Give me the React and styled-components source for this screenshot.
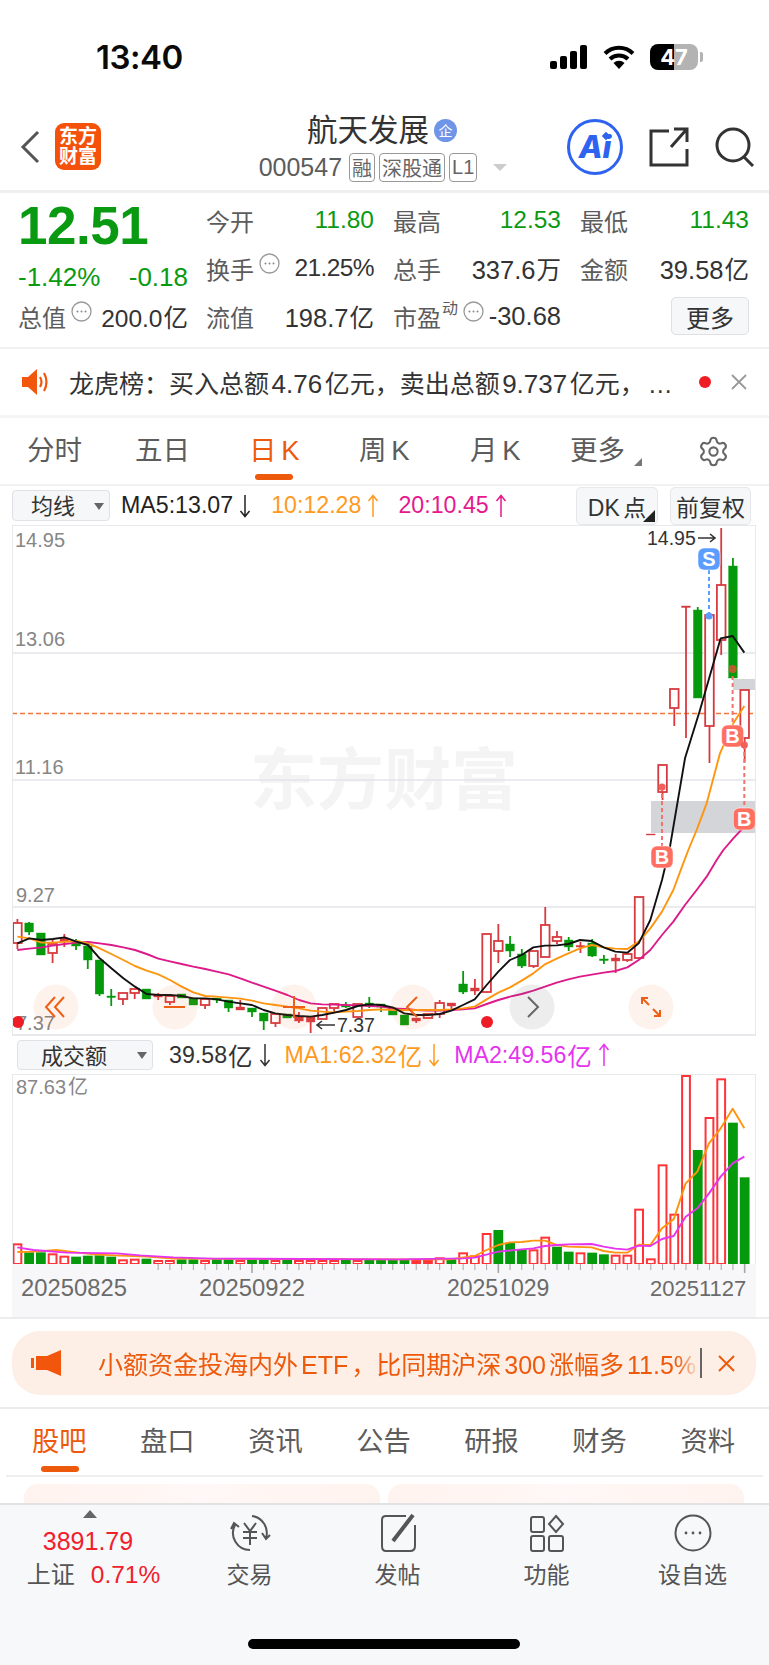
import React from "react";
import styled, { createGlobalStyle } from "styled-components";
import { Settings } from "lucide-react";

const FONT = `"Liberation Sans", "Noto Sans CJK SC", sans-serif`;
const ORANGE = "#ee5a0c";
const GREEN = "#0a9a12";
const GREY = "#5c5c5c";

const Global = createGlobalStyle`
  html, body { margin: 0; padding: 0; background: #fff; }
  body { font-family: ${FONT}; color: #333; }
  * { box-sizing: border-box; }
`;

const Page = styled.div`
  width: 769px; height: 1665px; overflow: hidden; background: #fff;
  display: flex; flex-direction: column; position: relative;
`;

/* ---------- status bar ---------- */
const StatusBar = styled.div`
  height: 108px; flex: none; display: flex; align-items: center;
  justify-content: space-between; padding: 6px 71px 0 96px;
`;
const Clock = styled.div`
  font-family: "Inter", ${FONT}; font-size: 33px; font-weight: 600; color: #0a0a0a; letter-spacing: -0.5px;
`;
const StatusIcons = styled.div`display: flex; align-items: center; gap: 15px;`;
const Battery = styled.div`
  width: 48px; height: 26px; border-radius: 8px; position: relative;
  background: linear-gradient(90deg, #000 0 50%, #b3b3b3 50% 100%);
  display: flex; align-items: center; justify-content: center;
  font-family: "Inter", ${FONT}; font-size: 22px; font-weight: 700; color: #fff;
  &::after { content: ""; position: absolute; right: -5px; top: 8px; width: 3px; height: 10px; border-radius: 0 2px 2px 0; background: #b3b3b3; }
`;

/* ---------- header ---------- */
const Header = styled.div`
  height: 85px; flex: none; display: grid; grid-template-columns: 203px 1fr 203px;
  align-items: center; padding-bottom: 5px; border-bottom: 3px solid #f0f0f0;
`;
const HeaderLeft = styled.div`display: flex; align-items: center; gap: 15px; padding-left: 20px;`;
const Logo = styled.div`
  width: 46px; height: 47px; border-radius: 9px; background: #f4510b; color: #fff;
  font-size: 19px; line-height: 20px; font-weight: 700; text-align: center;
  display: flex; align-items: center; justify-content: center;
`;
const TitleBlock = styled.div`display: flex; flex-direction: column; align-items: center; gap: 4px;`;
const TitleRow = styled.div`display: flex; align-items: center; gap: 5px; height: 38px; margin-right: 5px;`;
const Title = styled.div`font-size: 30.5px; color: #333; line-height: 38px;`;
const QiBadge = styled.span`
  width: 23px; height: 23px; border-radius: 50%; background: #6f95e8; color: #fff;
  font-size: 14px; display: flex; align-items: center; justify-content: center;
`;
const SubRow = styled.div`display: flex; align-items: center; gap: 4px; white-space: nowrap; margin-right: 3px;`;
const Code = styled.span`font-size: 25px; color: ${GREY}; margin-right: 3px;`;
const Tag = styled.span`
  height: 29px; padding: 0 2px; border: 1.5px solid #999; border-radius: 4px; color: #666;
  font-size: 20px; display: flex; align-items: center;
`;
const TagCaret = styled.span`
  width: 0; height: 0; border: 7px solid transparent; border-top: 7px solid #ccc; border-bottom: 0; margin-left: 12px;
`;
const HeaderRight = styled.div`display: flex; align-items: center; justify-content: flex-end; gap: 26px; padding-right: 14px;`;
const AiRound = styled.div`
  width: 56px; height: 56px; border-radius: 50%; border: 3px solid #2e62f0; color: #2e62f0;
  display: flex; align-items: center; justify-content: center; flex: none;
  font-family: "Inter", ${FONT}; font-weight: 800; font-style: italic; font-size: 31px; position: relative;
  &::after { content: ""; position: absolute; top: 11px; right: 11px; width: 6px; height: 6px; background: #2e62f0; transform: rotate(45deg); }
`;

/* ---------- quote ---------- */
const Quote = styled.div`
  height: 156px; flex: none; display: flex; border-bottom: 2px solid #f1f1f1;
`;
const QuoteLeft = styled.div`width: 206px; flex: none; padding: 3px 0 0 18px;`;
const Price = styled.div`
  font-size: 53px; font-weight: 700; line-height: 60px; color: ${GREEN}; letter-spacing: -0.5px; height: 61px;
`;
const ChangeRow = styled.div`
  width: 170px; height: 40px; display: flex; justify-content: space-between; align-items: center;
  font-size: 26px; color: ${GREEN};
`;
const CapRow = styled.div`
  width: 170px; height: 38px; display: flex; align-items: center; font-size: 24px; color: ${GREY};
  justify-content: space-between;
`;
const StatGrid = styled.div`
  display: grid; grid-template-columns: 168px 168px 169px; column-gap: 19px;
  grid-auto-rows: 48px; padding-top: 3px;
`;
const Stat = styled.div`display: flex; align-items: center; justify-content: space-between; white-space: nowrap;`;
const StatLabel = styled.span`display: flex; align-items: center; font-size: 24px; color: ${GREY};`;
const Sup = styled.span`font-size: 16px; margin-bottom: 18px; margin-left: 1px;`;
const StatValue = styled.span`
  font-size: ${(p) => (p.$wide ? 25.5 : 24.5)}px; color: ${(p) => (p.$up ? GREEN : "#333")};
  ${(p) => p.$tight && "letter-spacing: -0.6px;"}
`;
const Unit = styled.span`margin-left: 1px; font-size: 24.5px;`;
const MoreButton = styled.div`
  margin-left: auto; width: 78px; height: 38px; border: 1.5px solid #e0e0e0; border-radius: 5px; background: #f6f7f8;
  display: flex; align-items: center; justify-content: center; font-size: 24px; color: #333;
`;
const DotsWrap = styled.svg`flex: none; margin: 0 0 10px 5px;`;
const Dots = () => (
  <DotsWrap width="21" height="21" viewBox="0 0 21 21">
    <circle cx="10.5" cy="10.5" r="9.5" fill="none" stroke="#999" strokeWidth="1.3" />
    <circle cx="6.5" cy="10.5" r="1" fill="#888" /><circle cx="10.5" cy="10.5" r="1" fill="#888" /><circle cx="14.5" cy="10.5" r="1" fill="#888" />
  </DotsWrap>
);

/* ---------- notice ---------- */
const Notice = styled.div`
  height: 69px; flex: none; display: flex; align-items: center; padding: 0 22px;
  border-bottom: 3px solid #f5f5f5; white-space: nowrap;
`;
const NoticeText = styled.div`font-size: 25px; color: #333; margin-left: 20px; flex: 1;`;
const Num = styled.span`font-size: 26px; margin: 0 2.5px;`;
const Ellipsis = styled.span`margin-left: 3px;`;
const RedDot = styled.span`width: 12px; height: 12px; border-radius: 50%; background: #ee1c25; margin-right: 20px;`;

/* ---------- period tabs ---------- */
const PeriodTabs = styled.div`
  height: 68px; flex: none; display: grid; align-items: center; padding: 0 0 0 27px;
  grid-template-columns: 108px 114px 110px 111px 100px 127px auto; border-bottom: 2px solid #f2f2f2;
`;
const Period = styled.div`
  font-size: 27.5px; color: ${(p) => (p.$active ? ORANGE : GREY)}; position: relative; white-space: nowrap; line-height: 36px;
  word-spacing: -3px;
  ${(p) => p.$active && `&::after{content:"";position:absolute;left:6px;top:41px;width:38px;height:6px;border-radius:3px;background:${ORANGE};}`}
  ${(p) => p.$caret && `&::after{content:"";position:absolute;left:64px;top:25px;border:4px solid transparent;border-right-color:#777;border-bottom-color:#777;}`}
`;

/* ---------- indicators ---------- */
const IndicatorRow = styled.div`
  height: 39px; flex: none; display: flex; align-items: center; padding: 0 18px 0 12px; font-size: 23.5px; white-space: nowrap;
`;
const Select = styled.div`
  width: ${(p) => p.$w}px; height: ${(p) => p.$h}px; flex: none; border: 1.5px solid #dfe1e5; border-radius: 4px; background: #f6f7f9;
  display: flex; align-items: center; padding: 0 0 3px ${(p) => p.$pad}px; font-size: 22px; color: #333; position: relative;
  &::after { content: ""; position: absolute; right: 5px; top: 50%; margin-top: -3px; border: 5px solid transparent; border-top: 7px solid #666; border-bottom: 0; }
`;
const Ma = styled.span`
  display: inline-flex; align-items: center; color: ${(p) => p.$c}; margin-left: ${(p) => p.$ml}px; font-size: 23.2px;
`;
const ArrowSvg = styled.svg`display: block; flex: none; margin-left: 6px;`;
const Arrow = ({ up }) => (
  <ArrowSvg width="12" height="24" viewBox="0 0 12 24" fill="none" stroke="currentColor" strokeWidth="1.5">
    {up ? <path d="M6 23 V2 M1.5 7 L6 1.5 L10.5 7" /> : <path d="M6 1 V22 M1.5 17 L6 22.5 L10.5 17" />}
  </ArrowSvg>
);
const Spacer = styled.div`flex: 1;`;
const ToolButton = styled.div`
  height: 38px; width: ${(p) => p.$w}px; margin-left: ${(p) => p.$ml || 0}px; border: 1.5px solid #e6e7ea; border-radius: 5px; background: #f6f7f9;
  display: flex; align-items: center; justify-content: center; font-size: 23px; color: #333; position: relative; word-spacing: -3px;
  ${(p) => p.$caret && `&::after{content:"";position:absolute;right:2px;bottom:2px;border:6px solid transparent;border-right-color:#222;border-bottom-color:#222;}`}
`;

/* ---------- charts ---------- */
const ChartPane = styled.div`
  height: 511px; flex: none; margin: 0 13px 0 12px; border: 1.5px solid #e8e9ec;
  border-bottom-width: 2px; position: relative; overflow: hidden;
`;
const Svg = styled.svg`display: block; position: absolute; left: -1.5px; top: -1.5px;`;
const AxisText = styled.text`font-family: ${FONT}; font-size: 20px; fill: #868686;`;
const TagText = styled.text`font-family: ${FONT}; font-size: 19.5px; fill: #333;`;
const MarkText = styled.text`font-family: ${FONT}; font-size: 20px; font-weight: 700; fill: #fff; text-anchor: middle;`;
const Watermark = styled.text`font-family: ${FONT}; font-size: 67px; font-weight: 700; fill: #f4f4f4;`;

const VolumeHeader = styled.div`
  height: 38px; flex: none; display: flex; align-items: center; padding-left: 17px; white-space: nowrap; font-size: 23.5px; color: #333;
`;
const VolumePane = styled.div`
  height: 190px; flex: none; margin: 0 13px 0 12px; border: 1.5px solid #e8e9ec; border-bottom: 0; position: relative; overflow: hidden;
`;
const DateAxis = styled.div`
  height: 53px; flex: none; margin: 0 13px 0 12px; background: #f7f7f9; position: relative; overflow: hidden;
`;
const DateLabels = styled.svg`display: block;`;
const DateText = styled.text`font-family: ${FONT}; font-size: ${(p) => p.$s}px; fill: #6b6b6b;`;
const FullRule = styled.div`height: 2px; flex: none; background: #ececec;`;

/* ---------- banner ---------- */
const Banner = styled.div`
  height: 64px; flex: none; margin: 12px 13px 12px 12px; border-radius: 28px; background: #fdeee6;
  display: flex; align-items: center; padding: 0 18px 0 19px; color: ${ORANGE};
`;
const BannerText = styled.div`
  font-size: 25px; margin-left: 36px; width: 598px; white-space: nowrap; overflow: hidden;
  -webkit-mask-image: linear-gradient(90deg, #000 97%, rgba(0,0,0,.15) 100%);
`;
const Latin = styled.span`margin: 0 3px;`;
const Caret = styled.span`width: 1.5px; height: 30px; background: #666; margin-left: 4px; flex: none;`;
const BannerClose = styled.svg`margin-left: 16px; flex: none;`;

/* ---------- news tabs ---------- */
const NewsTabs = styled.div`
  height: 68px; flex: none; border-top: 2px solid #ececec; display: flex; justify-content: space-between; align-items: center;
  padding: 0 34px 0 32px;
`;
const NewsTab = styled.div`
  font-size: 27.3px; line-height: 36px; color: ${(p) => (p.$active ? ORANGE : GREY)}; position: relative;
  ${(p) => p.$active && `&::after{content:"";position:absolute;left:9px;top:42px;width:38px;height:6px;border-radius:3px;background:${ORANGE};}`}
`;
const NewsRule = styled.div`height: 2px; flex: none; margin: 0 6px; background: #efefef;`;
const CardPeek = styled.div`
  height: 26px; flex: none; padding: 7px 26px 0 24px; display: grid; grid-template-columns: 356px 356px; column-gap: 8px;
`;
const Peek = styled.div`border-radius: 14px 14px 0 0; background: linear-gradient(90deg, #fff3ef, #fff8f6, #fff3ef);`;

/* ---------- bottom bar ---------- */
const BottomBar = styled.div`
  flex: 1; background: #f7f8fa; border-top: 2px solid #e2e2e2; position: relative; display: grid;
  grid-template-columns: 187px 125px 171px 127px 165px; padding-top: 5px; align-content: start;
`;
const IndexCell = styled.div`display: flex; flex-direction: column; align-items: center; padding-left: 8px;`;
const Tri = styled.span`width: 0; height: 0; border: 7px solid transparent; border-top: 0; border-bottom: 8px solid #666; margin-right: 16px;`;
const IndexValue = styled.div`font-size: 25px; line-height: 32px; color: #f0202c; margin-top: 7px; margin-right: 19px;`;
const IndexRow = styled.div`display: flex; align-items: center; gap: 16px; font-size: 24px; line-height: 36px; color: #555; margin-right: 8px;`;
const IndexPct = styled.span`color: #f0202c; font-size: 24.5px;`;
const NavItem = styled.div`display: flex; flex-direction: column; align-items: center; gap: 5px; padding-top: 4px; color: #555; font-size: 23px; line-height: 36px;`;
const NavSvg = styled.svg`display: block;`;
const HomeIndicator = styled.div`
  position: absolute; left: 248px; bottom: 16px; width: 272px; height: 10px; border-radius: 5px; background: #000;
`;

/* ---------- data ---------- */
const X = (i) => 17.4 + 11.73 * i;
const z3 = ([x, y]) => `${x / 3},${880 + y / 3}`;
const z4 = ([x, y]) => `${400 + x / 3},${860 + y / 3}`;
const z5 = ([x, y]) => `${600 + x / 3},${510 + y / 3}`;
const z6 = ([x, y]) => `${400 + x / 3},${1060 + y / 3}`;
const z7 = ([x, y]) => `${x / 3},${1060 + y / 3}`;

// kind (h hollow red, r solid red, g green), wick top, body top, body bottom, wick bottom
const CANDLES = [
  ["h",919,923,943,949],["g",922,923,932,935],["g",933,933,955,955],["h",940,944,953,963],["r",934,938,942,947],
  ["g",939,941,946,950],["g",946,946,960,969],["g",960,960,994,996],["g",989,996,997.5,1006],["h",993,993,999,1005],
  ["h",989,989,993,999],["g",989,989,999,999],["r",993,995,997,1000],["h",996,996,1002,1005],["g",994,994,998,998],
  ["g",998,998,1005,1005],["h",999,999,1005,1009],["g",998,998,1000,1003],["g",1000,1000,1008,1012],["r",1000,1007,1010,1010],
  ["g",1008,1008,1012,1017],["g",1013,1013,1021,1030],["h",1014,1014,1023,1027],["g",1014,1014,1018,1018],["r",1012,1017,1021,1023],
  ["r",1017,1017,1022,1033],["h",1008,1008,1019,1019],["h",1004,1004,1008,1012],["g",1002,1005,1007,1008],["h",1004,1004,1017,1017],
  ["g",997,1003,1006,1008],["g",1004,1004,1007,1012],["g",1008,1008,1015,1015],["g",1015,1015,1025,1025],["r",1018,1018,1021,1023],
  ["h",1014,1014,1018,1018],["h",1000,1003,1014,1018],["r",1003,1003,1006,1010],["g",971,984,992,994],["r",979,988,991,995],
  ["h",934,934,992,992],["h",924,941,951,963],["g",936,944,951,957],["g",949,954,966,968],["h",951,951,966,968],
  ["h",907,925,957,957],["h",931,937,941,944],["g",937,940,947,951],["r",942,945.5,947,953],["g",939,943,956,957],
  ["g",955,959,960.5,964],["r",954,958,961,973],["h",954,954,960,962],["h",897,897,958,958],["r",834,834,835,835],
  ["h",765,765,792,800],["h",689,689,708,726],["r",606,606,607.5,738],["g",607,610,698,698],["h",615,615,726,763],
  ["h",528,585,640,655],["g",558,566,678,678],["h",690,690,738,762],
];

const MA5 = [
  ...[[52,190],[88,175],[124,180],[158,177],[194,172],[229,185],[264,195],[299,235],[334,265],[370,295],[405,320],[440,342],[475,345],[510,345],[545,348],[580,355],[616,355],[650,358],[686,365],[721,370],[756,375],[791,390],[826,400],[862,405],[897,408],[932,410],[967,405],[1003,398],[1038,390],[1073,378],[1108,373],[1143,375],[1178,382]].map(z3),
  ...[[13,460],[48,465],[84,465],[119,462],[154,452],[189,435],[224,418],[260,375],[295,335],[330,300],[365,285],[400,262],[435,257],[470,256],[505,252],[540,240],[575,243],[611,262],[646,275],[682,278],[716,250],[751,180],[786,60]].map(z4),
  ...[[210,1010],[255,745],[300,600],[362,385],[398,378],[433,428]].map(z5),
].join(" ");
const MA10 = [
  ...[[52,170],[88,175],[124,188],[158,188],[194,185],[229,183],[264,190],[299,205],[334,222],[370,240],[405,258],[440,272],[475,283],[510,300],[545,320],[580,337],[616,348],[650,350],[686,353],[721,356],[756,362],[791,370],[826,375],[862,380],[897,385],[932,392],[967,395],[1003,397],[1038,395],[1073,393],[1108,390],[1143,388],[1178,390]].map(z3),
  ...[[13,450],[48,450],[84,450],[119,450],[154,448],[189,445],[224,440],[260,418],[295,398],[330,382],[365,362],[400,340],[435,313],[470,296],[505,280],[540,265],[575,255],[611,262],[646,266],[682,267],[716,245],[751,205],[786,155],[820,90],[846,20]].map(z4),
  ...[[265,1020],[290,960],[320,880],[360,730],[400,640],[433,588]].map(z5),
].join(" ");
const MA20 = [
  ...[[52,210],[88,206],[124,202],[158,197],[194,192],[229,188],[264,186],[299,190],[334,195],[370,202],[405,210],[440,222],[475,236],[510,244],[545,252],[580,260],[616,267],[650,275],[686,283],[721,295],[756,308],[791,320],[826,332],[862,345],[897,360],[932,370],[967,373],[1003,374],[1038,375],[1073,376],[1108,378],[1143,380],[1178,385]].map(z3),
  ...[[13,447],[48,450],[84,452],[119,452],[154,450],[189,448],[224,445],[260,432],[295,420],[330,410],[365,402],[400,392],[435,380],[470,368],[505,358],[540,350],[575,344],[611,338],[646,333],[682,322],[716,300],[751,270],[786,225],[820,185],[855,135],[890,90],[920,50],[950,0]].map(z4),
  ...[[370,1020],[400,985],[433,950]].map(z5),
].join(" ");

const VOLS = "h550 g577 g577 h580 h587 g590 g587 g586 g590 h598 h596 g596 h600 h600 g598 g598 h600 g598 g598 h600 g598 g598 h600 g600 h600 h600 h600 h600 g600 h600 g600 g600 g600 g600 r600 r600 h592 g598 h577 h586 h519 g510 g548 g568 h568 h530 g560 g575 h577 g578 g583 h584 h584 h446 h595 h313 h461 h45 g270 h171 h55 g188 g352"
  .split(" ").map((s) => [s[0], 1060 + Number(s.slice(1)) / 3]);
const MA1 = [
  ...[[52,576],[100,575],[170,570],[210,575],[280,583],[360,587],[440,590],[520,596],[1190,598]].map(z7),
  ...[[0,598],[150,598],[190,592],[224,588],[260,570],[295,555],[330,547],[365,546],[400,542],[435,542],[470,555],[505,560],[575,562],[611,573],[646,578],[682,578],[716,554],[751,555],[786,505],[821,478],[857,370],[892,335],[927,250],[962,205],[998,146],[1033,205]].map(z6),
].join(" ");
const MA2 = [
  ...[[52,562],[100,570],[200,578],[350,580],[420,586],[520,592],[640,596],[1190,598]].map(z7),
  ...[[0,598],[190,595],[224,593],[295,575],[365,568],[400,565],[435,558],[470,555],[505,553],[575,552],[611,560],[646,566],[682,569],[716,557],[751,558],[786,537],[821,528],[857,470],[892,445],[927,400],[962,350],[998,310],[1033,290]].map(z6),
].join(" ");

const Candle = ({ i, d }) => {
  const [k, wt, bt, bb, wb] = d;
  const x = X(i);
  const c = k === "g" ? "#059a0b" : "#d83a3f";
  const w = 8.6;
  return (
    <g>
      <line x1={x} x2={x} y1={wt} y2={wb} stroke={c} strokeWidth="1.8" />
      <rect x={x - w / 2} y={bt} width={w} height={bb - bt} fill={k === "h" ? "#fff" : c} stroke={c} strokeWidth={k === "h" ? 1.8 : 0.4} />
    </g>
  );
};

const Marker = ({ x, y, c, t }) => (
  <g>
    <rect x={x - 11} y={y - 11} width="22" height="22" rx="6" fill={c} stroke="#fff" strokeOpacity=".5" />
    <MarkText x={x} y={y + 7}>{t}</MarkText>
  </g>
);

const RoundBtn = ({ x, grey, children }) => (
  <g>
    <circle cx={x} cy="1007" r="22.5" fill={grey ? "rgba(90,90,90,.11)" : "rgba(245,110,40,.09)"} />
    <g fill="none" stroke={grey ? "#666" : "#ee5f16"} strokeWidth="2">{children}</g>
  </g>
);

const KChart = () => (
  <Svg width="744" height="511" viewBox="12 525 744 511">
    <Watermark x="250" y="804">东方财富</Watermark>
    {[653, 780, 907].map((y) => <line key={y} x1="12" x2="756" y1={y} y2={y} stroke="#e3e5ea" strokeWidth="1.6" />)}
    <rect x="651" y="801" width="105" height="32" fill="#d3d5d9" />
    <rect x="733" y="679" width="23" height="11" fill="#d3d5d9" />
    <line x1="12" x2="756" y1="713.5" y2="713.5" stroke="#f0763a" strokeWidth="1.5" strokeDasharray="5 3" />
    {CANDLES.map((d, i) => <Candle key={i} i={i} d={d} />)}
    <polyline points={MA20} fill="none" stroke="#dc1a8a" strokeWidth="1.9" strokeLinejoin="round" />
    <polyline points={MA10} fill="none" stroke="#ff950f" strokeWidth="1.9" strokeLinejoin="round" />
    <polyline points={MA5} fill="none" stroke="#111" strokeWidth="1.9" strokeLinejoin="round" />

    <AxisText x="15" y="547">14.95</AxisText>
    <AxisText x="15" y="646">13.06</AxisText>
    <AxisText x="15" y="774">11.16</AxisText>
    <AxisText x="16" y="902">9.27</AxisText>
    <AxisText x="16" y="1030">7.37</AxisText>
    <TagText x="647" y="545">14.95</TagText>
    <path d="M698 538 H715 M710 534 L715 538 L710 542" fill="none" stroke="#333" strokeWidth="1.6" />
    <TagText x="337" y="1032">7.37</TagText>
    <path d="M317 1025 H335 M322 1021 L317 1025 L322 1029" fill="none" stroke="#333" strokeWidth="1.6" />

    <line x1="709" x2="709" y1="570" y2="616" stroke="#5b9dff" strokeWidth="2" strokeDasharray="4 3" />
    <circle cx="709" cy="616" r="3.6" fill="#5b9dff" />
    <Marker x={709} y={559} c="#5b9dff" t="S" />
    <line x1="732.6" x2="732.6" y1="669" y2="725" stroke="#f2736b" strokeWidth="2" strokeDasharray="4 3" />
    <circle cx="732.6" cy="669" r="4" fill="#b5602a" />
    <Marker x={732.6} y={736} c="#ff6f61" t="B" />
    <line x1="744.3" x2="744.3" y1="745" y2="808" stroke="#f2736b" strokeWidth="2" strokeDasharray="4 3" />
    <circle cx="744.3" cy="745" r="3.6" fill="#f2605a" />
    <Marker x={744.3} y={819} c="#ff6f61" t="B" />
    <line x1="662" x2="662" y1="787" y2="846" stroke="#f2736b" strokeWidth="2" strokeDasharray="4 3" />
    <circle cx="662" cy="787" r="3.6" fill="#f2605a" />
    <Marker x={662} y={857} c="#ff6f61" t="B" />

    <RoundBtn x={56}><path d="M55 997 l-9 10 9 10 M64 997 l-9 10 9 10" /></RoundBtn>
    <RoundBtn x={175}><path d="M164 1007 h21" /></RoundBtn>
    <RoundBtn x={294}><path d="M283 1007 h22 M294 996 v22" /></RoundBtn>
    <RoundBtn x={413}><path d="M417 997 l-10 10 10 10" /></RoundBtn>
    <RoundBtn x={532} grey><path d="M528 997 l10 10 -10 10" /></RoundBtn>
    <RoundBtn x={651}><path d="M642 998 l7 7 M642 1004 v-6 h6 M653 1009 l7 7 M660 1010 v6 h-6" /></RoundBtn>
    <circle cx="18" cy="1022" r="6" fill="#ee1c25" />
    <circle cx="487" cy="1022" r="6" fill="#ee1c25" />
  </Svg>
);

const VolChart = () => (
  <Svg width="744" height="190" viewBox="12 1074 744 190">
    {VOLS.map(([k, top], i) =>
      k === "h"
        ? <rect key={i} x={X(i) - 3.9} y={top + 1} width="7.8" height={1264 - top - 1} fill="#fff" stroke="#ff3338" strokeWidth="2" />
        : <rect key={i} x={X(i) - 4.9} y={top} width="9.8" height={1264 - top} fill={k === "g" ? "#059a0b" : "#ff3338"} />
    )}
    <polyline points={MA1} fill="none" stroke="#ff950f" strokeWidth="1.9" strokeLinejoin="round" />
    <polyline points={MA2} fill="none" stroke="#e533ee" strokeWidth="1.9" strokeLinejoin="round" />
    <AxisText x="16" y="1094">87.63<tspan dx="2">亿</tspan></AxisText>
  </Svg>
);

const DATE_TICKS = Array.from({ length: 51 }, (_, i) => i + 12);
const Dates = () => (
  <DateLabels width="744" height="53" viewBox="12 1264 744 53">
    {DATE_TICKS.map((i) => {
      const major = i === 20 || i === 41 || i === 62;
      return <line key={i} x1={X(i)} x2={X(i)} y1="1264" y2={major ? 1273 : 1270} stroke="#a5a5a5" strokeWidth={major ? 1.6 : 1} />;
    })}
    <DateText x="21" y="1296" $s={23.8}>20250825</DateText>
    <DateText x="199" y="1296" $s={23.8}>20250922</DateText>
    <DateText x="447" y="1296" $s={23}>20251029</DateText>
    <DateText x="650" y="1296" $s={22}>20251127</DateText>
  </DateLabels>
);

const NAV_STROKE = { fill: "none", stroke: "#555", strokeWidth: 2 };

export default function App() {
  return (
    <Page>
      <Global />
      <StatusBar>
        <Clock>13:40</Clock>
        <StatusIcons>
          <svg width="38" height="24" viewBox="0 0 38 24">
            <rect x="0" y="16" width="7" height="8" rx="2" fill="#000" /><rect x="10" y="11" width="7" height="13" rx="2" fill="#000" />
            <rect x="20" y="6" width="7" height="18" rx="2" fill="#000" /><rect x="30" y="0" width="7" height="24" rx="2" fill="#000" />
          </svg>
          <svg width="32" height="24" viewBox="0 0 32 24">
            <path d="M2 8.5 A20 20 0 0 1 30 8.5 M7 14 A13 13 0 0 1 25 14" fill="none" stroke="#000" strokeWidth="4" />
            <path d="M10.5 18 A8 8 0 0 1 21.5 18 L16 24 Z" fill="#000" />
          </svg>
          <Battery>47</Battery>
        </StatusIcons>
      </StatusBar>

      <Header>
        <HeaderLeft>
          <svg width="20" height="34" viewBox="0 0 20 34"><path d="M18 2 L3 17 L18 32" fill="none" stroke="#555" strokeWidth="3" /></svg>
          <Logo>东方<br />财富</Logo>
        </HeaderLeft>
        <TitleBlock>
          <TitleRow><Title>航天发展</Title><QiBadge>企</QiBadge></TitleRow>
          <SubRow>
            <Code>000547</Code><Tag>融</Tag><Tag>深股通</Tag><Tag>L1</Tag><TagCaret />
          </SubRow>
        </TitleBlock>
        <HeaderRight>
          <AiRound>Ai</AiRound>
          <svg width="40" height="40" viewBox="0 0 40 40" fill="none" stroke="#333" strokeWidth="3">
            <path d="M20 4 H2 V38 H38 V22 M22 20 L37 3 M25 2 H38 V15" />
          </svg>
          <svg width="40" height="40" viewBox="0 0 40 40" fill="none" stroke="#333" strokeWidth="3">
            <circle cx="18" cy="18" r="16" /><path d="M29 30 L38 39" />
          </svg>
        </HeaderRight>
      </Header>

      <Quote>
        <QuoteLeft>
          <Price>12.51</Price>
          <ChangeRow><span>-1.42%</span><span>-0.18</span></ChangeRow>
          <CapRow>
            <StatLabel>总值<Dots /></StatLabel>
            <StatValue>200.0<Unit>亿</Unit></StatValue>
          </CapRow>
        </QuoteLeft>
        <StatGrid>
          <Stat><StatLabel>今开</StatLabel><StatValue $up>11.80</StatValue></Stat>
          <Stat><StatLabel>最高</StatLabel><StatValue $up>12.53</StatValue></Stat>
          <Stat><StatLabel>最低</StatLabel><StatValue $up>11.43</StatValue></Stat>
          <Stat><StatLabel>换手<Dots /></StatLabel><StatValue $tight>21.25%</StatValue></Stat>
          <Stat><StatLabel>总手</StatLabel><StatValue $wide>337.6<Unit>万</Unit></StatValue></Stat>
          <Stat><StatLabel>金额</StatLabel><StatValue $wide>39.58<Unit>亿</Unit></StatValue></Stat>
          <Stat><StatLabel>流值</StatLabel><StatValue $wide>198.7<Unit>亿</Unit></StatValue></Stat>
          <Stat><StatLabel>市盈<Sup>动</Sup><Dots /></StatLabel><StatValue $wide>-30.68</StatValue></Stat>
          <Stat><MoreButton>更多</MoreButton></Stat>
        </StatGrid>
      </Quote>

      <Notice>
        <svg width="27" height="30" viewBox="0 0 27 30">
          <path d="M0 10 H6 L15 2 V28 L6 20 H0 Z" fill="#f2560c" />
          <path d="M18 10 Q21 15 18 20 M22 6 Q27 15 22 24" fill="none" stroke="#f2560c" strokeWidth="2.2" />
        </svg>
        <NoticeText>龙虎榜：买入总额<Num>4.76</Num>亿元，卖出总额<Num>9.737</Num>亿元，<Ellipsis>…</Ellipsis></NoticeText>
        <RedDot />
        <svg width="16" height="16" viewBox="0 0 16 16"><path d="M1 1 L15 15 M15 1 L1 15" stroke="#999" strokeWidth="1.8" /></svg>
      </Notice>

      <PeriodTabs>
        <Period>分时</Period>
        <Period>五日</Period>
        <Period $active>日 K</Period>
        <Period>周 K</Period>
        <Period>月 K</Period>
        <Period $caret>更多</Period>
        <Settings size={33} color="#666" strokeWidth={1.5} />
      </PeriodTabs>

      <IndicatorRow>
        <Select $w={98} $h={31} $pad={18}>均线</Select>
        <Ma $c="#222" $ml={11}>MA5:13.07<Arrow /></Ma>
        <Ma $c="#ff9a1f" $ml={20}>10:12.28<Arrow up /></Ma>
        <Ma $c="#e5188e" $ml={19}>20:10.45<Arrow up /></Ma>
        <Spacer />
        <ToolButton $w={82} $caret>DK 点</ToolButton>
        <ToolButton $w={81} $ml={12}>前复权</ToolButton>
      </IndicatorRow>

      <ChartPane><KChart /></ChartPane>

      <VolumeHeader>
        <Select $w={136} $h={30} $pad={23}>成交额</Select>
        <Ma $c="#333" $ml={16}>39.58<Unit>亿</Unit><Arrow /></Ma>
        <Ma $c="#ff9a1f" $ml={14}>MA1:62.32<Unit>亿</Unit><Arrow /></Ma>
        <Ma $c="#e533ee" $ml={14}>MA2:49.56<Unit>亿</Unit><Arrow up /></Ma>
      </VolumeHeader>
      <VolumePane><VolChart /></VolumePane>
      <DateAxis><Dates /></DateAxis>
      <FullRule />

      <Banner>
        <svg width="31" height="26" viewBox="0 0 31 26">
          <path d="M0 8 H3 V18 H0 Z M5 6 H16 L30 0 V26 L16 20 H5 Z" fill="#f2560c" />
        </svg>
        <BannerText>小额资金投海内外<Latin>ETF</Latin>，比同期沪深<Latin>300</Latin>涨幅多<Latin>11.5%</Latin></BannerText>
        <Caret />
        <BannerClose width="17" height="17" viewBox="0 0 17 17"><path d="M1 1 L16 16 M16 1 L1 16" stroke="#ee5a0c" strokeWidth="2" /></BannerClose>
      </Banner>

      <NewsTabs>
        <NewsTab $active>股吧</NewsTab>
        <NewsTab>盘口</NewsTab>
        <NewsTab>资讯</NewsTab>
        <NewsTab>公告</NewsTab>
        <NewsTab>研报</NewsTab>
        <NewsTab>财务</NewsTab>
        <NewsTab>资料</NewsTab>
      </NewsTabs>
      <NewsRule />
      <CardPeek><Peek /><Peek /></CardPeek>

      <BottomBar>
        <IndexCell>
          <Tri />
          <IndexValue>3891.79</IndexValue>
          <IndexRow>上证<IndexPct>0.71%</IndexPct></IndexRow>
        </IndexCell>
        <NavItem>
          <NavSvg width="42" height="38" viewBox="0 0 42 38" {...NAV_STROKE}>
            <path d="M23 2 A17 17 0 0 1 37 24 M33 19 L37 25 L41 21 M21 36 A17 17 0 0 1 6 11 M2 15 L5 9 L10 13" />
            <path d="M15 9 L21 17 L27 9 M14 18 H28 M14 24 H28 M21 17 V31" />
          </NavSvg>
          交易
        </NavItem>
        <NavItem>
          <NavSvg width="38" height="38" viewBox="0 0 38 38" {...NAV_STROKE}>
            <path d="M27 2 H7 Q3 2 3 6 V32 Q3 37 7 37 H31 Q36 37 36 32 V11" />
            <path d="M14 27 L34 1" strokeWidth="4" />
          </NavSvg>
          发帖
        </NavItem>
        <NavItem>
          <NavSvg width="36" height="38" viewBox="0 0 36 38" {...NAV_STROKE}>
            <rect x="2" y="3" width="13" height="15" rx="2" /><rect x="2" y="22" width="13" height="15" rx="2" /><rect x="20" y="22" width="14" height="15" rx="2" />
            <path d="M27 2 L34 10 L27 18 L20 10 Z" />
          </NavSvg>
          功能
        </NavItem>
        <NavItem>
          <NavSvg width="38" height="38" viewBox="0 0 38 38" {...NAV_STROKE}>
            <circle cx="19" cy="19" r="17.5" />
            <circle cx="12" cy="19" r="1.4" fill="#555" stroke="none" /><circle cx="19" cy="19" r="1.4" fill="#555" stroke="none" /><circle cx="26" cy="19" r="1.4" fill="#555" stroke="none" />
          </NavSvg>
          设自选
        </NavItem>
        <HomeIndicator />
      </BottomBar>
    </Page>
  );
}
